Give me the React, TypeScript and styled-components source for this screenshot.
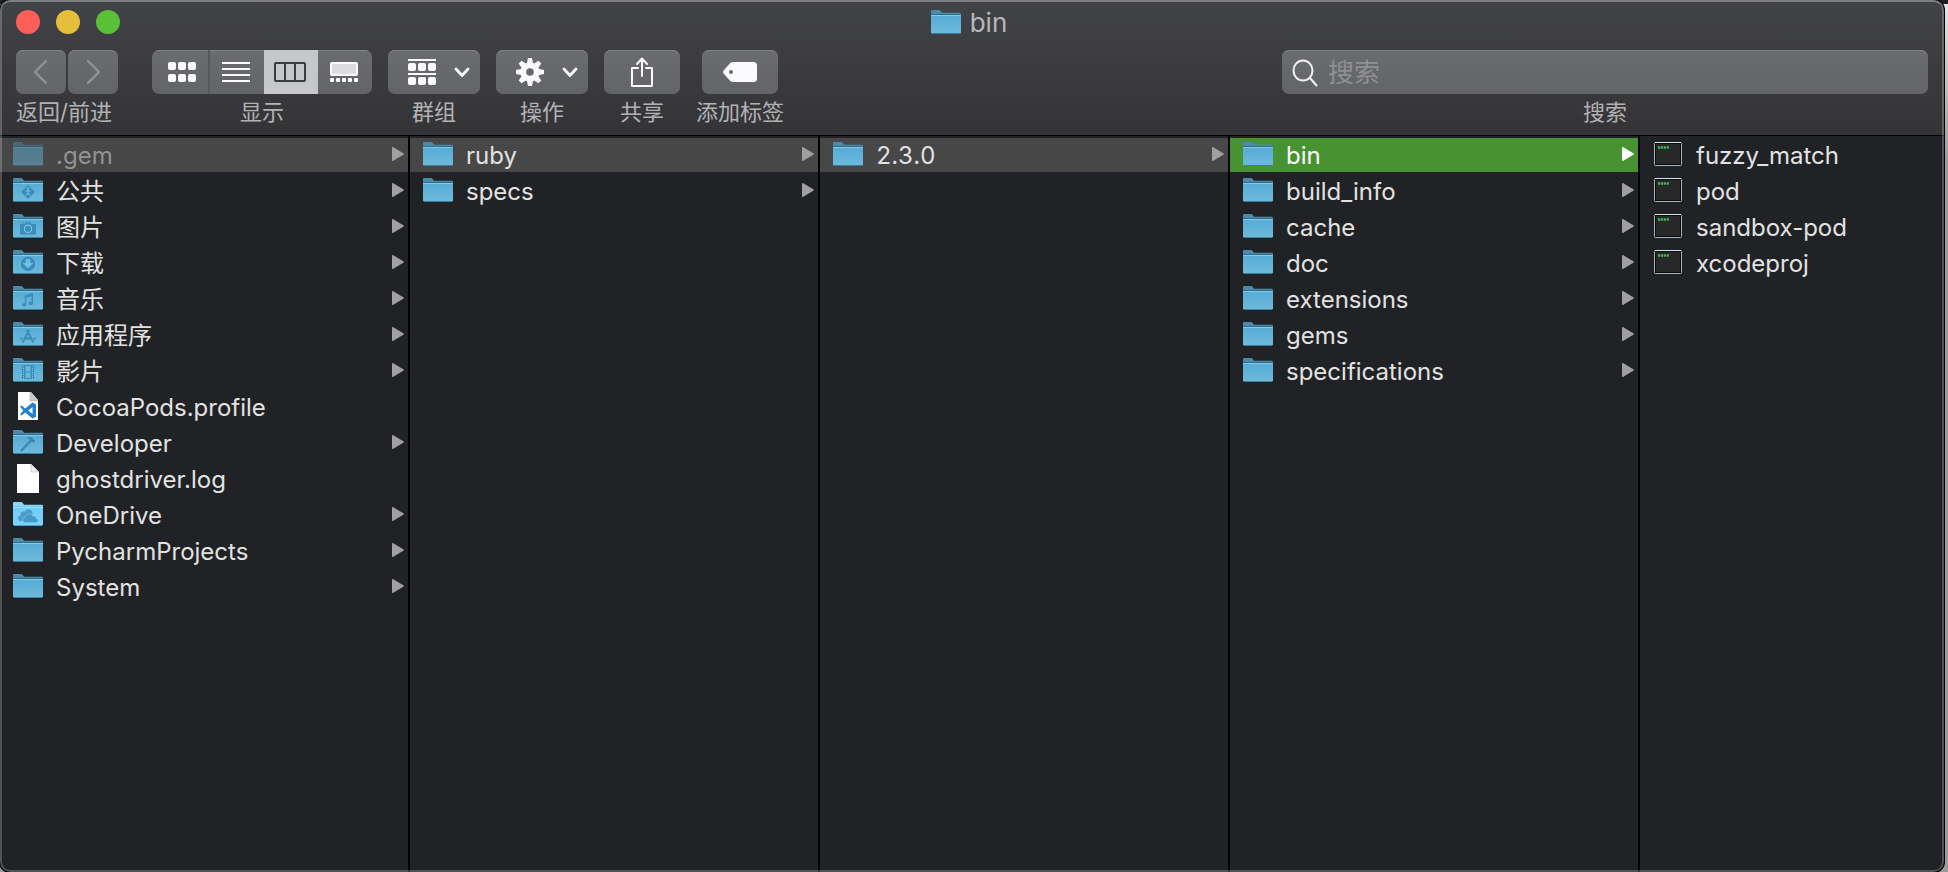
import React, { useId } from "react";
import styled, { createGlobalStyle, css } from "styled-components";

const GlobalStyle = createGlobalStyle`
  *, *::before, *::after { box-sizing: border-box; }
  body {
    margin: 0;
    background: #9b9b9b linear-gradient(#1f2024 4px, #e4e4e4 4px, #9b9b9b 160px) no-repeat;
    font-family: Inter, "Noto Sans CJK SC", sans-serif;
    color: #dcdcdc;
  }
  button, input { font: inherit; color: inherit; }
`;

const Desktop = styled.div`
  display: flex;
  min-height: 100vh;
  padding-right: 4px;
`;

const Window = styled.main`
  position: relative;
  flex: 1;
  min-width: 0;
  display: flex;
  flex-direction: column;
  overflow: hidden;
  border-radius: 10px;
  background: #212225;
  box-shadow: 0 0 0 1px #000;

  &::after {
    content: "";
    position: absolute;
    inset: 0;
    border-radius: 10px;
    border: 2px solid rgba(255, 255, 255, 0.22);
    border-top-color: rgba(255, 255, 255, 0.32);
    pointer-events: none;
  }
`;

const Header = styled.header`
  height: 136px;
  background: linear-gradient(#424346, #343437);
  border-bottom: 1px solid #000;
`;

const TitleBar = styled.div`
  display: grid;
  grid-template-columns: 1fr auto 1fr;
  align-items: center;
  height: 44px;
  margin-bottom: 6px;
  padding: 0 22px 0 16px;
`;

const Lights = styled.div`
  display: flex;
  gap: 16px;
`;

const Light = styled.button<{ $color: string }>`
  width: 24px;
  height: 24px;
  padding: 0;
  border: 0;
  border-radius: 50%;
  background: ${(p) => p.$color};
`;

const Title = styled.h1`
  display: flex;
  align-items: center;
  gap: 9px;
  margin: 0;
  padding-top: 2px;
  font-size: 26px;
  line-height: 32px;
  font-weight: 400;
  color: #b6b7ba;
`;

const Toolbar = styled.div`
  display: flex;
  gap: 16px;
  padding: 0 16px;
`;

const ToolItem = styled.div<{ $lead?: boolean }>`
  display: flex;
  flex-direction: column;
  align-items: ${(p) => (p.$lead ? "flex-start" : "center")};
  gap: 4px;
  margin-right: ${(p) => (p.$lead ? 18 : 0)}px;
`;

const Caption = styled.span`
  font-size: 22px;
  line-height: 28px;
  color: #b2b2b5;
  white-space: nowrap;
`;

const face = css`
  background: linear-gradient(#6b6c6f, #636467);
  box-shadow: inset 0 1px 0 #808184;
`;

const ButtonPair = styled.div`
  display: flex;
  gap: 2px;
`;

const ToolButton = styled.button<{ $width: number; $menu?: boolean }>`
  ${face}
  display: flex;
  align-items: center;
  justify-content: center;
  gap: 18px;
  width: ${(p) => p.$width}px;
  height: 44px;
  padding: 0 0 0 ${(p) => (p.$menu ? 10 : 0)}px;
  border: 0;
  border-radius: 7px;
  color: #fbfbfe;

  &:disabled { color: #939396; }
`;

const Segments = styled.div`
  display: flex;
  overflow: hidden;
  border-radius: 7px;
`;

const Segment = styled.button<{ $divided?: boolean }>`
  ${face}
  display: flex;
  align-items: center;
  justify-content: center;
  width: ${(p) => (p.$divided ? 58 : 54)}px;
  height: 44px;
  padding: ${(p) => (p.$divided ? "0 0 0 4px" : "0 2px 0 0")};
  border: 0;
  border-right: ${(p) => (p.$divided ? "2px solid #57585b" : "0")};
  color: #fbfbfe;

  &[aria-pressed="true"] {
    background: #c6c7ca;
    box-shadow: none;
    color: #3a3b3f;
  }
`;

const SearchItem = styled.div`
  display: flex;
  flex: 0 1 646px;
  flex-direction: column;
  align-items: center;
  gap: 4px;
  min-width: 160px;
  margin-left: auto;
`;

const SearchField = styled.div`
  ${face}
  display: flex;
  align-items: center;
  gap: 10px;
  width: 100%;
  height: 44px;
  padding: 0 10px;
  border-radius: 7px;
  color: #f1f1f3;
`;

const SearchInput = styled.input`
  flex: 1;
  min-width: 0;
  padding: 2px 0 0;
  border: 0;
  outline: 0;
  background: none;
  font-size: 26px;
  line-height: 36px;

  &::placeholder { color: #8f9092; opacity: 1; }
`;

const Columns = styled.div`
  flex: 1;
  display: grid;
  grid-template-columns: repeat(4, minmax(0, 410fr)) minmax(0, 304fr);
`;

const Column = styled.ul`
  display: flex;
  flex-direction: column;
  gap: 2px;
  margin: 0;
  padding: 2px 0 0;
  list-style: none;
  border-right: 2px solid #000;

  &:last-child { border-right: 0; }
`;

type Tone = "plain" | "path" | "active";
const rowBg: Record<Tone, string> = { plain: "transparent", path: "#474747", active: "#479331" };

const Row = styled.button<{ $tone: Tone; $hidden?: boolean }>`
  display: flex;
  align-items: center;
  gap: 13px;
  width: 100%;
  height: 34px;
  padding: 0 4px 0 13px;
  border: 0;
  background: ${(p) => rowBg[p.$tone]};
  color: ${(p) => (p.$tone === "active" ? "#fff" : p.$hidden ? "#929292" : "#e2e2e2")};
  font-size: 24px;
  line-height: 32px;
  text-align: left;
`;

const IconBox = styled.span<{ $dim?: boolean }>`
  display: flex;
  flex: none;
  justify-content: center;
  width: 30px;
  height: 34px;
  padding-top: 2px;
  opacity: ${(p) => (p.$dim ? 0.5 : 1)};
`;

const IconSlot = styled.span<{ $tall: boolean }>`
  display: flex;
  align-items: flex-start;
  padding-top: ${(p) => (p.$tall ? 0 : 2)}px;
`;

const Name = styled.span<{ $numeric: boolean }>`
  flex: 1;
  min-width: 0;
  padding-top: 2px;
  overflow: hidden;
  white-space: nowrap;
  text-overflow: ellipsis;
  font-variant-numeric: ${(p) => (p.$numeric ? "tabular-nums" : "normal")};
`;

const Arrow = styled.svg<{ $on?: boolean }>`
  flex: none;
  margin-bottom: 2px;
  fill: ${(p) => (p.$on ? "#fff" : "#a0a0a2")};
`;

type Kind = "folder" | "public" | "pictures" | "downloads" | "music" | "apps" | "movies"
  | "developer" | "onedrive" | "vscode" | "file" | "exec";

const emblems: Partial<Record<Kind, React.ReactNode>> = {
  public: (
    <>
      <path d="M15 7 22 14 15 21 8 14z" fill="#3a8dbb" />
      <circle cx="15.2" cy="10.4" r="1" fill="#7cc6e8" />
      <path d="M12.500 13.400l2.500-1.200 2.500 1.200M15 12v3l-2 3M15 15l2.200 2.500" stroke="#7cc6e8" strokeWidth=".9" fill="none" />
    </>
  ),
  pictures: (
    <>
      <path d="M9 9.2V8.200h2.500v1M7 10h4.500l1-1.800h5l1 1.800H23v10.500H7z" fill="#3a8dbb" />
      <circle cx="15" cy="14.800" r="3.700" fill="#3a8dbb" stroke="#7cc6e8" strokeWidth="1.100" />
    </>
  ),
  downloads: (
    <>
      <circle cx="15" cy="14" r="7.200" fill="#3a8dbb" />
      <path d="M12.700 9.200h4.600V13h3L15 18.600 9.700 13h3z" fill="#70c0e4" />
    </>
  ),
  music: (
    <>
      <path d="M12.600 18.500V10l6.700-1.800V17.200" stroke="#3a8dbb" strokeWidth="1.400" fill="none" />
      <path d="M11.900 9.400l8.100-2.200v2.600l-8.100 2.200z" fill="#3a8dbb" />
      <ellipse cx="11.200" cy="18.800" rx="2.200" ry="1.800" fill="#3a8dbb" />
      <ellipse cx="17.900" cy="17.400" rx="2.200" ry="1.800" fill="#3a8dbb" />
    </>
  ),
  apps: (
    <path d="M9.600 20.500 16.200 8M13.800 8l6.800 12.500M7 16.500h2.400M11.500 16.500h6.800M20.600 16.500H23" stroke="#3a8dbb" strokeWidth="1.800" fill="none" />
  ),
  movies: (
    <>
      <rect x="9" y="7" width="12" height="14" fill="#3a8dbb" />
      <path d="M12.500 8h5v5.500h-5zM12.500 14.500h5V20h-5z" fill="#67b7dc" />
      <path d="M10.500 8v13M19.500 8v13" stroke="#7cc6e8" strokeWidth="1" strokeDasharray="1 1" />
    </>
  ),
  developer: (
    <>
      <path d="M8.500 20.500 18 10.500" stroke="#3c86ae" strokeWidth="2.200" strokeLinecap="round" />
      <path d="M13.500 8c2.200-1.200 4.300-1.200 6 .2l2.300 2.200.2 1.800-1.800.2-3-2.200c-.8-1.300-1.900-1.900-3.700-2.200z" fill="#3c86ae" />
    </>
  ),
  onedrive: (
    <>
      <g fill="#4e9dc8">
        <circle cx="7.800" cy="16.200" r="2.800" />
        <circle cx="10.500" cy="12.500" r="3" />
        <circle cx="15.500" cy="11.500" r="4" />
        <path d="M7.800 12h10v7h-10z" />
      </g>
      <g fill="#4598c8" stroke="#6fc4ee" strokeWidth=".8">
        <path d="M12.500 20.500c-3.600 0-3.800-4.600-.5-5 .2-4.200 6.200-5.200 7.800-1.400 2.200-.4 3.400 1 3.200 2.500 2.800.2 2.800 3.900 0 3.900z" />
      </g>
    </>
  ),
};

function FolderIcon({ kind = "folder" }: { kind?: Kind }) {
  const id = useId();
  const bright = kind === "onedrive";
  return (
    <svg width="30" height="26" viewBox="0 0 30 26" aria-hidden="true">
      <defs>
        <linearGradient id={id} x1="0" y1="0" x2="0" y2="1">
          <stop offset="0" stopColor={bright ? "#6fcdf8" : "#55acd6"} />
          <stop offset="1" stopColor={bright ? "#7dd3fa" : "#6fb9da"} />
        </linearGradient>
      </defs>
      <path d="M0 1.200Q0 0 1.200 0H8q1 0 1.600.8L11 2.700h18q1 0 1 1V8H0z" fill={bright ? "#8cd6f8" : "#4a8bab"} />
      <rect y="4" width="30" height="1" fill={bright ? "#75c8ee" : "#356a85"} />
      <path d="M0 5h30v17.500q0 1-1 1H1q-1 0-1-1z" fill={`url(#${id})`} />
      <rect y="5" width="30" height="1" fill={bright ? "#9be0fd" : "#82c9e8"} />
      <rect x="1" y="23" width="28" height="1" fill={bright ? "#4f9fc9" : "#3d7d9c"} />
      {emblems[kind]}
    </svg>
  );
}

function FileIcon({ code }: { code?: boolean }) {
  return (
    <svg width="24" height="30" viewBox="0 0 24 30" aria-hidden="true">
      <path d={code ? "M2 0h13l7 8v20H2z" : "M1 0h14l8 8v21H1z"} fill="#fff" />
      <path d={code ? "M14 0v9h8z" : "M15 0v8h8z"} fill={code ? "#c9cacc" : "#efefef"} stroke="#b5b5b8" strokeWidth=".6" />
      {code && (
        <path
          d="M16.500 10.500 20 12.200V24.800l-3.500 1.700-7.300-6-3.600 2.900L4 22.400l3.300-3.900L4 14.600l1.600-1 3.600 2.900zM16.500 15l-4.200 3.500 4.200 3.500z"
          fill="#2180cf"
          fillRule="evenodd"
        />
      )}
    </svg>
  );
}

function ExecIcon() {
  return (
    <svg width="28" height="24" viewBox="0 0 28 24" aria-hidden="true">
      <rect x=".5" y=".5" width="27" height="23" rx="1" fill="#0c0c0c" stroke="#a5b4b6" />
      <path d="M1 .5h26" stroke="#cfe6ea" />
      <rect x="2" y="2" width="24" height="20" fill="#272827" />
      <path d="M4 5.500h11" stroke="#3fb554" strokeWidth="2.400" strokeDasharray="2.200 .7" />
    </svg>
  );
}

function ItemIcon({ kind }: { kind: Kind }) {
  if (kind === "exec") return <ExecIcon />;
  if (kind === "file") return <FileIcon />;
  if (kind === "vscode") return <FileIcon code />;
  return <FolderIcon kind={kind} />;
}

const Chevron = () => (
  <svg width="16" height="12" viewBox="0 0 16 12" fill="none" stroke="currentColor" strokeWidth="2.800" strokeLinecap="round" strokeLinejoin="round" aria-hidden="true">
    <path d="M2 3l6 6.500L14 3" />
  </svg>
);

const Back = ({ flip }: { flip?: boolean }) => (
  <svg width="16" height="26" viewBox="0 0 16 26" fill="none" stroke="currentColor" strokeWidth="2.400" strokeLinecap="round" strokeLinejoin="round" aria-hidden="true">
    <path d={flip ? "M3 2l11 11L3 24" : "M13 2L2 13l11 11"} />
  </svg>
);

const cells = [0, 10, 20];

const GridIcon = () => (
  <svg width="28" height="20" viewBox="0 0 28 20" fill="currentColor" aria-hidden="true">
    {cells.map((x) => [0, 12].map((y) => <rect key={`${x}-${y}`} x={x} y={y} width="8" height="8" rx="2" />))}
  </svg>
);

const ListIcon = () => (
  <svg width="28" height="20" viewBox="0 0 28 20" stroke="currentColor" strokeWidth="2" aria-hidden="true">
    <path d="M0 1h28M0 7h28M0 13h28M0 19h28" />
  </svg>
);

const ColumnsIcon = () => (
  <svg width="32" height="20" viewBox="0 0 32 20" fill="none" stroke="currentColor" strokeWidth="2" aria-hidden="true">
    <rect x="1" y="1" width="30" height="18" rx="1" />
    <path d="M11 1v18M21 1v18" />
  </svg>
);

const GalleryIcon = () => (
  <svg width="28" height="20" viewBox="0 0 28 20" aria-hidden="true">
    <rect x="1" y="1" width="26" height="12" rx="1" fill="#dcdce0" stroke="currentColor" strokeWidth="2" />
    {[0, 6, 12, 18, 24].map((x) => <rect key={x} x={x} y="16" width="4" height="4" rx="1" fill="currentColor" />)}
  </svg>
);

const GroupIcon = () => (
  <svg width="28" height="26" viewBox="0 0 28 26" fill="currentColor" aria-hidden="true">
    <path d="M0 0h28v2H0zM0 14h28v2H0z" />
    {cells.map((x) => [4, 18].map((y) => <rect key={`${x}-${y}`} x={x} y={y} width="8" height="8" rx="2" />))}
  </svg>
);

const GearIcon = () => (
  <svg width="28" height="28" viewBox="-14 -14 28 28" aria-hidden="true">
    {[0, 45, 90, 135].map((a) => (
      <path key={a} d="M-2-14h4l1.200 6V8L2 14h-4l-1.200-6V-8z" fill="currentColor" transform={`rotate(${a})`} />
    ))}
    <circle r="9.600" fill="currentColor" />
    <circle r="3.800" fill="#67686b" />
  </svg>
);

const ShareIcon = () => (
  <svg width="24" height="30" viewBox="0 0 24 30" fill="none" stroke="currentColor" strokeWidth="2" strokeLinecap="round" strokeLinejoin="round" aria-hidden="true">
    <path d="M8 11H2v18h20V11h-6M12 19V2M7 7l5-5.500L17 7" />
  </svg>
);

const TagIcon = () => (
  <svg width="34" height="20" viewBox="0 0 34 20" aria-hidden="true">
    <path d="M10 0h20.500Q34 0 34 3.500v13Q34 20 30.500 20H10Q8.500 20 7 18.700L1 12Q-.8 10 1 8L7 1.300Q8.500 0 10 0z" fill="currentColor" />
    <circle cx="8" cy="10" r="2" fill="#67686b" />
  </svg>
);

const SearchIcon = () => (
  <svg width="26" height="34" viewBox="0 0 26 34" fill="none" stroke="currentColor" strokeWidth="2" strokeLinecap="round" aria-hidden="true">
    <ellipse cx="11" cy="15.500" rx="9.500" ry="10" />
    <path d="M18 23l6.500 7.500" />
  </svg>
);

type Item = { name: string; kind?: Kind; tone?: Tone; hidden?: boolean };

const columns: Item[][] = [
  [
    { name: ".gem", tone: "path", hidden: true },
    { name: "公共", kind: "public" },
    { name: "图片", kind: "pictures" },
    { name: "下载", kind: "downloads" },
    { name: "音乐", kind: "music" },
    { name: "应用程序", kind: "apps" },
    { name: "影片", kind: "movies" },
    { name: "CocoaPods.profile", kind: "vscode" },
    { name: "Developer", kind: "developer" },
    { name: "ghostdriver.log", kind: "file" },
    { name: "OneDrive", kind: "onedrive" },
    { name: "PycharmProjects" },
    { name: "System" },
  ],
  [{ name: "ruby", tone: "path" }, { name: "specs" }],
  [{ name: "2.3.0", tone: "path" }],
  [
    { name: "bin", tone: "active" },
    { name: "build_info" },
    { name: "cache" },
    { name: "doc" },
    { name: "extensions" },
    { name: "gems" },
    { name: "specifications" },
  ],
  [
    { name: "fuzzy_match", kind: "exec" },
    { name: "pod", kind: "exec" },
    { name: "sandbox-pod", kind: "exec" },
    { name: "xcodeproj", kind: "exec" },
  ],
];

const leafKinds: Kind[] = ["vscode", "file", "exec"];

function Entry({ name, kind = "folder", tone = "plain", hidden }: Item) {
  return (
    <li>
      <Row type="button" $tone={tone} $hidden={hidden}>
        <IconBox $dim={hidden}>
          <IconSlot $tall={kind === "vscode" || kind === "file"}>
            <ItemIcon kind={kind} />
          </IconSlot>
        </IconBox>
        <Name $numeric={/^[\d.]+$/.test(name)}>{name}</Name>
        {!leafKinds.includes(kind) && (
          <Arrow $on={tone === "active"} width="12" height="14" viewBox="0 0 12 14" aria-hidden="true">
            <path d="M0 1Q0-.4 1.300.3L11.300 6.300q1 .7 0 1.400L1.300 13.700Q0 14.400 0 13z" />
          </Arrow>
        )}
      </Row>
    </li>
  );
}

export default function App() {
  return (
    <>
      <GlobalStyle />
      <Desktop>
        <Window>
          <Header>
            <TitleBar>
              <Lights>
                <Light type="button" $color="#fe5f58" aria-label="关闭" />
                <Light type="button" $color="#e5bf3c" aria-label="最小化" />
                <Light type="button" $color="#5ac038" aria-label="缩放" />
              </Lights>
              <Title><FolderIcon />bin</Title>
            </TitleBar>
            <Toolbar>
              <ToolItem $lead>
                <ButtonPair>
                  <ToolButton type="button" $width={50} disabled aria-label="返回"><Back /></ToolButton>
                  <ToolButton type="button" $width={50} disabled aria-label="前进"><Back flip /></ToolButton>
                </ButtonPair>
                <Caption>返回/前进</Caption>
              </ToolItem>
              <ToolItem>
                <Segments role="group" aria-label="显示">
                  <Segment type="button" $divided aria-pressed="false" aria-label="图标"><GridIcon /></Segment>
                  <Segment type="button" aria-pressed="false" aria-label="列表"><ListIcon /></Segment>
                  <Segment type="button" aria-pressed="true" aria-label="分栏"><ColumnsIcon /></Segment>
                  <Segment type="button" aria-pressed="false" aria-label="画廊"><GalleryIcon /></Segment>
                </Segments>
                <Caption>显示</Caption>
              </ToolItem>
              <ToolItem>
                <ToolButton type="button" $width={92} $menu aria-label="群组"><GroupIcon /><Chevron /></ToolButton>
                <Caption>群组</Caption>
              </ToolItem>
              <ToolItem>
                <ToolButton type="button" $width={92} $menu aria-label="操作"><GearIcon /><Chevron /></ToolButton>
                <Caption>操作</Caption>
              </ToolItem>
              <ToolItem>
                <ToolButton type="button" $width={76} aria-label="共享"><ShareIcon /></ToolButton>
                <Caption>共享</Caption>
              </ToolItem>
              <ToolItem>
                <ToolButton type="button" $width={76} aria-label="添加标签"><TagIcon /></ToolButton>
                <Caption>添加标签</Caption>
              </ToolItem>
              <SearchItem>
                <SearchField>
                  <SearchIcon />
                  <SearchInput id="finder-search" type="search" placeholder="搜索" />
                </SearchField>
                <Caption as="label" htmlFor="finder-search">搜索</Caption>
              </SearchItem>
            </Toolbar>
          </Header>
          <Columns>
            {columns.map((items, i) => (
              <Column key={i}>
                {items.map((item) => <Entry key={item.name} {...item} />)}
              </Column>
            ))}
          </Columns>
        </Window>
      </Desktop>
    </>
  );
}
